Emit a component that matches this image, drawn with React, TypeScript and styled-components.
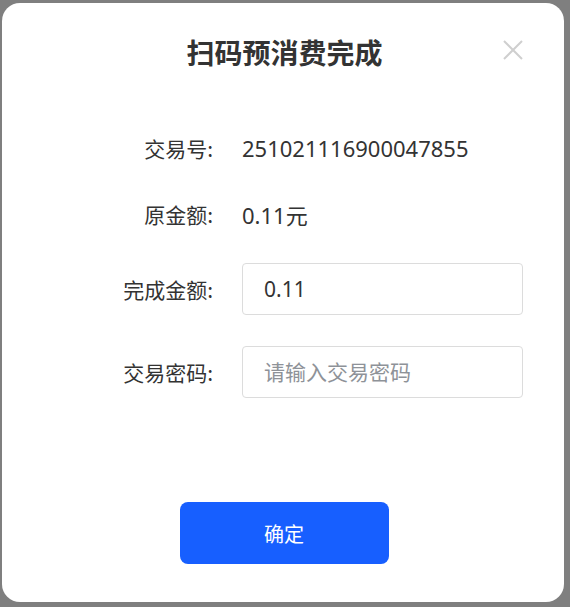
import styled, { createGlobalStyle } from "styled-components";

const GlobalStyle = createGlobalStyle`
  html, body {
    margin: 0;
    padding: 0;
    background: #7f7f7f;
  }
  body {
    font-family: "Noto Sans", "Noto Sans CJK SC", sans-serif;
  }
`;

const Backdrop = styled.div`
  width: 570px;
  height: 607px;
  box-sizing: border-box;
  padding: 3px 6px 5px 2px;
  background: #7f7f7f;
`;

const Dialog = styled.div`
  height: 100%;
  box-sizing: border-box;
  background: #fff;
  border-radius: 18px;
  display: flex;
  flex-direction: column;
  padding: 28px 0 38px;
`;

const Header = styled.div`
  position: relative;
  display: flex;
  justify-content: center;
  height: 42px;
  align-items: center;
  padding-left: 3px;
`;

const Title = styled.h2`
  margin: 0;
  font-family: "Noto Sans CJK SC", sans-serif;
  font-size: 28px;
  font-weight: 700;
  color: #333;
`;

const CloseButton = styled.button`
  position: absolute;
  right: 39px;
  top: 7px;
  width: 24px;
  height: 24px;
  padding: 0;
  border: none;
  background: none;
  color: #cfcfcf;
  display: flex;
  align-items: center;
  justify-content: center;
`;

const Form = styled.div`
  display: grid;
  grid-template-columns: 211px 281px;
  column-gap: 29px;
  align-items: center;
  margin-top: 42px;
`;

const Label = styled.div<{ $h: number }>`
  height: ${({ $h }) => $h}px;
  display: flex;
  align-items: center;
  justify-content: flex-end;
  font-family: "Noto Sans CJK SC", sans-serif;
  font-size: 21px;
  color: #333;
`;

const Value = styled.div`
  height: 66px;
  display: flex;
  align-items: center;
  font-family: "Noto Sans", "Noto Sans CJK SC", sans-serif;
  font-size: 22px;
  color: #333;
`;

const InputWrap = styled.div`
  height: 83px;
  display: flex;
  align-items: center;
`;

const Input = styled.input`
  width: 100%;
  height: 52px;
  box-sizing: border-box;
  border: 1px solid #dcdcdc;
  border-radius: 4px;
  padding: 0 21px;
  font-family: "Noto Sans", "Noto Sans CJK SC", sans-serif;
  font-size: 21px;
  color: #333;
  outline: none;

  &::placeholder {
    color: #8e9298;
    font-family: "Noto Sans CJK SC", sans-serif;
  }
`;

const Footer = styled.div`
  margin-top: auto;
  display: flex;
  justify-content: center;
  padding-left: 2px;
`;

const ConfirmButton = styled.button`
  width: 209px;
  height: 62px;
  border: none;
  border-radius: 8px;
  background: #175fff;
  color: #fff;
  font-family: "Noto Sans CJK SC", sans-serif;
  font-size: 20px;
`;

export default function App() {
  return (
    <>
      <GlobalStyle />
      <Backdrop>
        <Dialog>
          <Header>
            <Title>扫码预消费完成</Title>
            <CloseButton aria-label="关闭">
              <svg width="22" height="22" viewBox="0 0 22 22" fill="none">
                <path d="M2 2 L20 20 M20 2 L2 20" stroke="currentColor" strokeWidth="2" />
              </svg>
            </CloseButton>
          </Header>
          <Form>
            <Label $h={66}>交易号:</Label>
            <Value>251021116900047855</Value>
            <Label $h={66}>原金额:</Label>
            <Value>0.11元</Value>
            <Label $h={83}>完成金额:</Label>
            <InputWrap>
              <Input defaultValue="0.11" />
            </InputWrap>
            <Label $h={83}>交易密码:</Label>
            <InputWrap>
              <Input type="password" placeholder="请输入交易密码" />
            </InputWrap>
          </Form>
          <Footer>
            <ConfirmButton>确定</ConfirmButton>
          </Footer>
        </Dialog>
      </Backdrop>
    </>
  );
}
